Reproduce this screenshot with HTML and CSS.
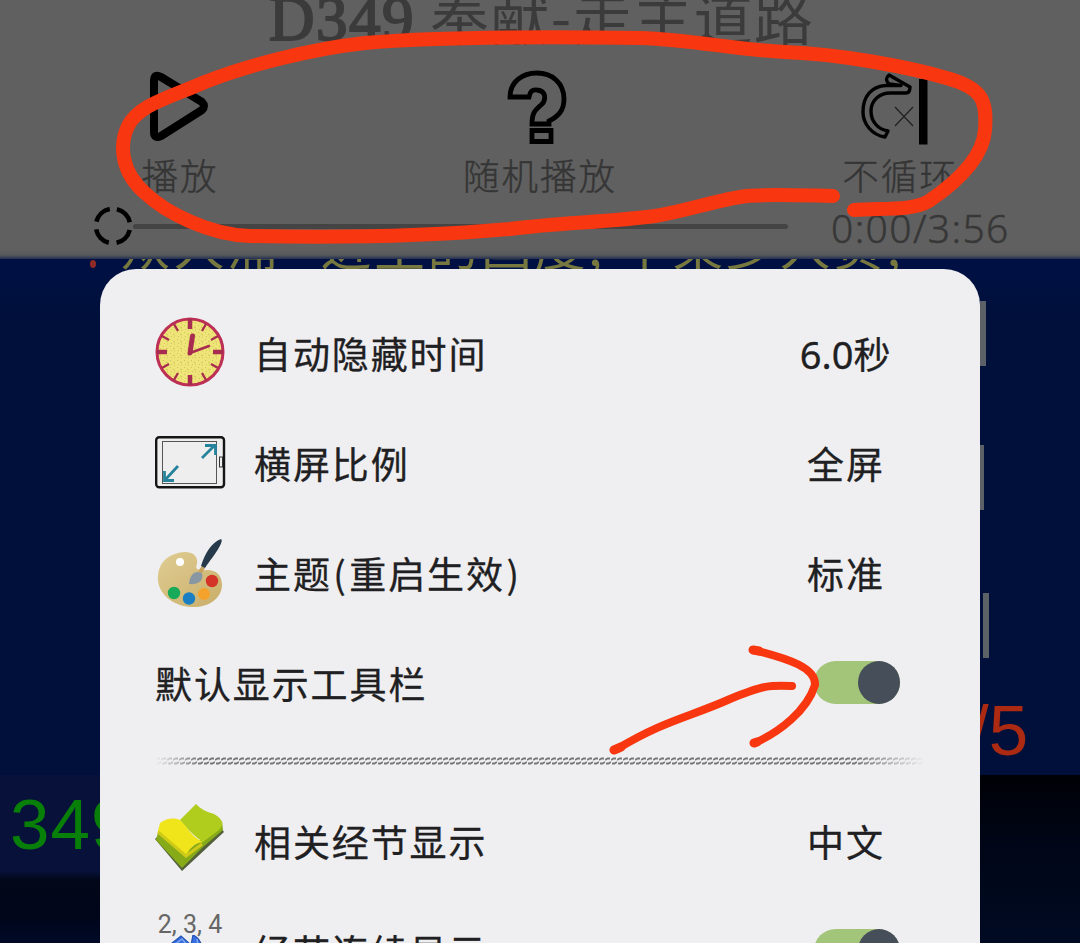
FILE: index.html
```html
<!DOCTYPE html>
<html lang="zh-CN">
<head>
<meta charset="utf-8">
<title>播放设置</title>
<link rel="stylesheet" href="styles.css">
</head>
<body>
<div class="screen">
  <header class="player">
    <h1 class="title"><span class="title-latin">D349</span> <span class="title-cjk">奉献-走主道路</span></h1>
    <nav class="controls">
      <div class="control">
        <svg class="control-icon" viewBox="0 0 80 80"><path d="M16 15Q16 7 23 11L64 36Q68 40 64 44L23 70Q16 73 16 66Z" fill="none" stroke="#000" stroke-width="8" stroke-linejoin="round"/></svg>
        <span class="control-label">播放</span>
      </div>
      <div class="control">
        <svg class="control-icon" viewBox="0 0 80 80"><path d="M12 31C12 16 24 7 39 7C54 7 66 17 66 33C66 44 61 50 51 55V58H34C34 47 37 44 43 39C48 35 49 25 39 24C34 23 32 26 31 31ZM34 64.500H53V75.500H34Z" fill="none" stroke="#000" stroke-width="4.8"/></svg>
        <span class="control-label">随机播放</span>
      </div>
      <div class="control">
        <svg class="control-icon" viewBox="0 0 80 80"><path d="M30 65L27 71C14 69 5 58 5 46C5 30 14 20 28 19.500H43L31 18Q26 13 31 9L52 21Q52 27 48 27H32C21 27 13 35 13 45C13 55 19 63 30 65Z" fill="none" stroke="#000" stroke-width="3.4" stroke-linejoin="round"/><path d="M37 41L55 60M55 41L37 60" stroke="#222" stroke-width="1.3"/><path d="M61 13H69.500V78.500H61Z" fill="#000"/></svg>
        <span class="control-label">不循环</span>
      </div>
    </nav>
    <div class="seek">
      <svg class="thumb" viewBox="0 0 40 40"><circle cx="20" cy="20" r="17.2" fill="none" stroke="#000" stroke-width="4.6" stroke-dasharray="19 8.02" stroke-dashoffset="-4" transform="rotate(-90 20 20)"/></svg>
      <div class="track"></div>
      <span class="time">0:00/3:56</span>
    </div>
  </header>
  <main class="stage">
    <div class="lyrics"><span class="verse-dot"></span><span class="verse">众人涌</span><span class="verse verse-second">进主的国度</span><span class="verse verse-comma">,</span><span class="verse verse-third">十架少人负</span><span class="verse verse-comma">,</span></div>
    <div class="marks"><i class="mark"></i><i class="mark mark-two"></i><i class="mark mark-three"></i></div>
    <div class="page-count">/5</div>
    <div class="lower">
      <div class="number">349</div>
      <div class="lower-right"></div>
    </div>
  </main>
  <section class="dialog">
    <div class="row">
      <svg class="icon" viewBox="0 0 70 70">
        <defs><pattern id="grain" width="7" height="7" patternUnits="userSpaceOnUse"><path d="M1 2l1-1M4 3l2 1M2 6l1-1M5 6l1 0" stroke="#c9bd55" stroke-width=".8"/></pattern></defs>
        <circle cx="35" cy="35" r="33" fill="#efe477" stroke="#bd3055" stroke-width="3"/><circle cx="35" cy="35" r="31" fill="url(#grain)"/>
        <g stroke="#a82c50" stroke-width="4.5"><path d="M35 2V12M35 58V68M2 35H12M58 35H68"/><path stroke-width="2.3" d="M19 7L23 14M51 7L47 14M19 63L23 56M51 63L47 56M7 19L14 23M63 19L56 23M7 51L14 47M63 51L56 47"/><path d="M35 36L37.5 19" stroke-width="5" stroke-linecap="round"/><path d="M35 36L54 29" stroke-width="2.6" stroke-linecap="round"/></g>
      </svg>
      <span class="label">自动隐藏时间</span><span class="value"><span class="digits">6.0</span>秒</span>
    </div>
    <div class="row">
      <svg class="icon" viewBox="0 0 70 70"><rect x="1.2" y="10.2" width="67.8" height="50" rx="3" fill="#eee" stroke="#151515" stroke-width="2.4"/><rect x="7.5" y="14.5" width="54" height="42" fill="none" stroke="#555" stroke-width="1"/><rect x="64.5" y="30" width="3" height="10" fill="none" stroke="#333" stroke-width="1"/><g fill="none" stroke="#26839b" stroke-width="2.8"><path d="M47 31L60 18M50 18.5H60.5V28M23 39L10 53M9.500 44V53.500H19"/></g></svg>
      <span class="label">横屏比例</span><span class="value">全屏</span>
    </div>
    <div class="row">
      <svg class="icon icon-palette" viewBox="0 0 70 70">
        <defs><linearGradient id="wood" x2="1" y2="1"><stop stop-color="#e0cd93"/><stop offset="1" stop-color="#c9ae69"/></linearGradient></defs>
        <path d="M42 24C44 11 29 10 20 14C7 18 2 29 3 41C5 57 22 68 41 67C57 66 67 56 67 45C67 35 61 30 52 30C45 31 39 30 42 24Z" fill="url(#wood)"/>
        <circle cx="25" cy="22" r="4" fill="#fff"/><circle cx="57" cy="41" r="6.200" fill="#d43327"/><circle cx="19" cy="53" r="6.200" fill="#18aa59"/><circle cx="34" cy="58.500" r="6.200" fill="#197fc2"/><circle cx="49" cy="54" r="6" fill="#f5a22d"/>
        <path d="M34 44C35 34 40 30 47 33C49 40 44 45 34 44Z" fill="#8997a2"/><path d="M47 26L50 28L47 33L43 31Z" fill="#c7a25b"/><path d="M46 26C50 13 57 2 66 -1C70 2 56 19 50 28Z" fill="#263a4b"/>
      </svg>
      <span class="label">主题<span class="paren">(</span>重启生效<span class="paren">)</span></span><span class="value">标准</span>
    </div>
    <div class="row">
      <span class="label">默认显示工具栏</span><span class="toggle"><i class="knob"></i></span>
    </div>
    <div class="divider"><svg class="rope" viewBox="0 0 770 8"><defs><pattern id="twist" width="6" height="8" patternUnits="userSpaceOnUse"><path d="M0 3L2.500 1.500H5M1 6.500H3.500L6 5" fill="none" stroke="#777" stroke-width="1.800"/></pattern></defs><rect width="770" height="8" fill="url(#twist)"/></svg></div>
    <div class="row">
      <svg class="icon" viewBox="0 0 70 70"><path d="M0 34L3 31L27 58L66 23L69 27L27 66Z" fill="#52613a"/><path d="M4 24L31 47L67 16L68 25L48 42L27 63L1 35Z" fill="#87ab18"/><path d="M25 15L41 -1Q47 6 59 9Q65 12 67 17Q68 21 64 25L48 37Q36 29 25 15Z" fill="#b0cc1c"/><path d="M5 18Q15 11 25 15C32 21 36 32 48 37Q40 38 35 44L31 50L3 26Z" fill="#f0e51b"/><path d="M3 27L31 51L47 39" fill="none" stroke="#cfca17" stroke-width="3"/></svg>
      <span class="label">相关经节显示</span><span class="value">中文</span>
    </div>
    <div class="row">
      <div class="verses-icon"><span class="verses-text">2, 3, 4</span><svg class="verses-book" viewBox="0 0 70 44"><path d="M12 12L26 1L36 10L38 0Q45 3 47 12L67 26L36 42L4 27Z" fill="#376ee0" stroke="#2351b4" stroke-width="1.200"/><path d="M18 11L27 4L34 12M42 4L44 17" fill="none" stroke="#7da7f0" stroke-width="1.500"/></svg></div>
      <span class="label">经节连续显示</span><span class="toggle"><i class="knob"></i></span>
    </div>
  </section>
  <svg class="annotation" viewBox="0 0 1080 943">
    <path d="M833 196C790 195 765 194 747 196C720 199 690 210 655 216C610 222 555 223 510 229C430 236 340 238 250 236C210 235 166 213 145 193C121 172 119 145 128 126C139 105 166 99 205 82C245 66 310 49 365 43C445 36 565 37 640 38C695 40 730 49 785 52C840 54 910 67 950 79C983 89 987 101 985 130C983 159 954 184 929 201C912 211 885 208 854 210" stroke-width="14"/>
    <path d="M617 749C665 720 690 717 730 699C764 685 770 685 792 686" stroke-width="8"/>
    <path d="M754 650C790 659 816 668 815 685C807 711 779 732 755 743" stroke-width="8"/>
    <path d="M614 750L621 747M753 650L759 651M754 743L757 742" stroke-width="9"/>
  </svg>
</div>
</body>
</html>
```

FILE: styles.css
```css
* { box-sizing: border-box; }
body { margin: 0; }
.screen {
  position: relative;
  display: flex;
  flex-direction: column;
  width: 1080px;
  height: 943px;
  overflow: hidden;
  background: #00103b;
  font-family: "Noto Sans CJK SC", "Noto Sans", sans-serif;
}
.player {
  z-index: 1;
  display: flex;
  flex: none;
  flex-direction: column;
  height: 259px;
  background: linear-gradient(#606060 250px, #58595b 255px, #243052);
}
.title {
  display: flex;
  gap: 19px;
  height: 66px;
  margin: 0;
  padding-left: 269px;
  overflow: hidden;
  color: #3b3b3b;
  font-weight: 400;
  line-height: 60px;
  white-space: nowrap;
}
.title-latin {
  width: 142px;
  margin-top: -11px;
  font-family: "Liberation Serif", serif;
  font-size: 63px;
  letter-spacing: 1.5px;
  -webkit-text-stroke: 2px #3b3b3b;
}
.title-cjk { margin-top: -15px; font-size: 59px; font-weight: 400; letter-spacing: 1.4px; }
.controls { display: grid; grid-template-columns: repeat(3, 360px); height: 136px; }
.control { display: flex; flex-direction: column; align-items: center; }
.control-icon { width: 80px; height: 80px; margin-left: -4px; overflow: visible; }
.control-label {
  margin-top: 3px;
  color: #353535;
  font-size: 36.5px;
  font-weight: 300;
  letter-spacing: 2px;
  line-height: 52px;
  -webkit-text-stroke: .4px #353535;
}
.seek { display: flex; align-items: center; height: 48px; padding-left: 93px; }
.thumb { width: 40px; height: 40px; }
.track { width: 655px; height: 5px; border-radius: 3px; background: #444; }
.time {
  margin-left: 43px;
  padding-top: 2px;
  color: #373737;
  font-family: "Noto Sans", sans-serif;
  font-size: 39px;
  font-weight: 300;
  letter-spacing: 1.4px;
  -webkit-text-stroke: .5px #373737;
}
.stage { position: relative; display: flex; flex: 1; flex-direction: column; background: linear-gradient(#001044, #00103b 60px, #00103a 450px, #00103a); }
.lyrics {
  display: flex;
  flex: none;
  height: 54px;
  margin-top: -40px;
  padding-left: 90px;
  color: #77783f;
  font-size: 51px;
  font-weight: 400;
  letter-spacing: 2.5px;
  line-height: 50px;
  white-space: nowrap;
}
.verse-dot { width: 6px; height: 8px; margin: 41px 24px 0 0; border-radius: 50%; background: #902b25; }
.verse-second { margin-left: 40px; }
.verse-comma { width: 31px; }
.marks { display: flex; flex-direction: column; align-items: flex-start; height: 383px; padding: 28px 0 0 980px; }
.mark { width: 6px; height: 65px; flex: none; background: #5c6168; }
.mark-two { width: 4px; margin-top: 79px; }
.mark-three { margin: 83px 0 0 3px; }
.page-count {
  height: 119px;
  padding-left: 969px;
  color: #ab2a11;
  font-family: "Liberation Sans", sans-serif;
  font-size: 71px;
  line-height: 150px;
}
.lower { display: flex; justify-content: space-between; height: 168px; background: linear-gradient(#07113a 96px, #020719 105px, #000519 140px, #000a28); }
.number { padding: 10px 0 0 10px; color: #087f08; font-family: "Liberation Sans", sans-serif; font-size: 71px; letter-spacing: 1px; line-height: 80px; }
.lower-right { width: 100px; background: linear-gradient(#000106, #000617 70px, #000a22); }
.dialog {
  position: absolute;
  top: 269px;
  left: 100px;
  z-index: 2;
  width: 880px;
  height: 700px;
  padding: 30px 40px 0 55px;
  overflow: hidden;
  border-radius: 36px 36px 0 0;
  background: #efeef0;
}
.row { display: flex; align-items: center; height: 110px; color: #202022; }
.icon { width: 70px; height: 70px; margin: -4px 29px 0 0; flex: none; overflow: visible; }
.icon-palette { margin-top: 1px; }
.label, .value { margin-top: -3px; font-size: 37px; font-weight: 400; letter-spacing: 1.9px; white-space: nowrap; -webkit-text-stroke: .3px #202022; }
.paren { display: inline-block; width: 17.5px; text-align: center; }
.value { width: 200px; margin-left: auto; margin-right: -6px; text-align: center; }
.digits { font-family: "Noto Sans", sans-serif; font-size: 38px; letter-spacing: 0; }
.toggle { display: flex; justify-content: flex-end; width: 86px; height: 43px; margin: -4px 40px 0 auto; border-radius: 22px; background: #a3c57a; }
.knob { width: 42px; height: 43px; border-radius: 50%; background: #464e5a; }
.divider { height: 48px; padding-top: 18px; }
.rope { display: block; width: 770px; height: 8px; mask-image: linear-gradient(to right, transparent, #000 6%, #000 91%, transparent); }
.verses-icon { width: 70px; height: 80px; margin-right: 29px; }
.verses-text { display: block; height: 23px; color: #666; font-family: Roboto, sans-serif; font-size: 25px; line-height: 25px; text-align: center; white-space: pre; }
.verses-book { display: block; width: 70px; height: 44px; }
.annotation {
  position: absolute;
  inset: 0;
  z-index: 3;
  fill: none;
  stroke: #f83710;
  stroke-linecap: round;
  stroke-linejoin: round;
}
```
